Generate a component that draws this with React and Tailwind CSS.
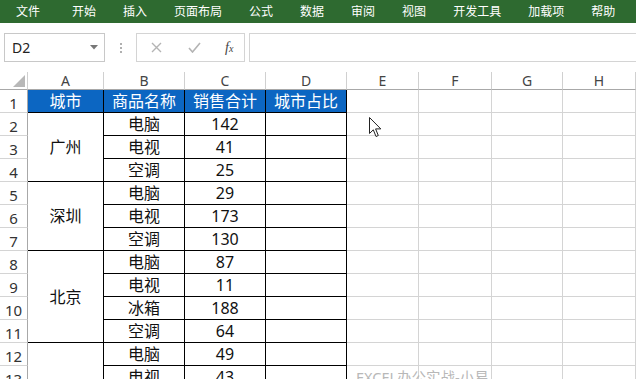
const tabs = ['文件', '开始', '插入', '页面布局', '公式', '数据', '审阅', '视图', '开发工具', '加载项', '帮助']

const products = ['电脑', '电视', '空调', '电脑', '电视', '空调', '电脑', '电视', '冰箱', '空调', '电脑', '电视']
const sales = [142, 41, 25, 29, 173, 130, 87, 11, 188, 64, 49, 43]

const rowNums = [1, 2, 3, 4, 5, 6, 7, 8, 9, 10, 11, 12, 13]

function ColHeader({ label }) {
  return (
    <div className="h-[18px] border-r border-b border-r-[#d0d0d0] border-b-[#a8a8a8] flex items-end justify-center pb-[1px] text-[14px] leading-none text-[#444]">
      {label}
    </div>
  )
}

function BlueCell({ children }) {
  return (
    <div className="h-[23px] bg-[#0c66c2] border-r border-b border-black flex items-center justify-center text-white text-[16px] leading-none">
      {children}
    </div>
  )
}

function Cell({ children, h = 'h-[23px]' }) {
  return (
    <div className={`${h} border-r border-b border-black flex items-center justify-center text-[16px] leading-none text-[#111]`}>
      {children}
    </div>
  )
}

function TableCol({ letter, width, title, values }) {
  return (
    <div className={`${width} shrink-0 flex flex-col`}>
      <ColHeader label={letter} />
      <BlueCell>{title}</BlueCell>
      {values.map((v, i) => (
        <Cell key={i}>{v}</Cell>
      ))}
    </div>
  )
}

function EmptyCol({ letter, width }) {
  return (
    <div className={`${width} shrink-0 flex flex-col`}>
      <ColHeader label={letter} />
      {rowNums.map((n) => (
        <div key={n} className="h-[23px] border-r border-b border-[#d4d4d4]" />
      ))}
    </div>
  )
}

export default function App() {
  return (
    <div
      className="relative w-[636px] h-[379px] overflow-hidden bg-white"
      style={{ fontFamily: '"Noto Sans", "Noto Sans CJK SC", sans-serif' }}
    >
      {/* ribbon tabs */}
      <div className="h-[23px] bg-[#2e6a30] flex items-center pl-[16px] gap-[27px] text-white text-[12px] leading-none">
        {tabs.map((t, i) => (
          <span key={t} className={i === 0 ? 'mr-[5px]' : ''}>{t}</span>
        ))}
      </div>

      {/* formula bar */}
      <div className="h-[49px] flex items-start pt-[10px]">
        <div className="ml-[4px] w-[101px] h-[29px] border border-[#c8c8c8] flex items-center justify-between pl-[7px] pr-[6px]">
          <span className="text-[14px] text-[#222] leading-none">D2</span>
          <svg width="8" height="5" viewBox="0 0 8 5">
            <path d="M0 0 L8 0 L4 4.5 Z" fill="#777" />
          </svg>
        </div>
        <div className="w-[31px] h-[29px] flex flex-col items-center justify-center gap-[2px]">
          <span className="w-[2px] h-[2px] bg-[#b0b0b0]" />
          <span className="w-[2px] h-[2px] bg-[#b0b0b0]" />
          <span className="w-[2px] h-[2px] bg-[#b0b0b0]" />
        </div>
        <div className="w-[109px] h-[29px] border border-[#d4d4d4] flex items-center pl-[14px]">
          <svg width="11" height="11" viewBox="0 0 11 11" className="mr-[26px]">
            <path d="M1 1 L10 10 M10 1 L1 10" stroke="#b4b4b4" strokeWidth="1.4" />
          </svg>
          <svg width="13" height="11" viewBox="0 0 13 11" className="mr-[24px]">
            <path d="M1 6 L4.5 10 L12 1" stroke="#b4b4b4" strokeWidth="1.6" fill="none" />
          </svg>
          <span className="text-[14px] italic text-[#444] leading-none" style={{ fontFamily: '"Liberation Serif", serif' }}>
            f<span className="text-[10px]">x</span>
          </span>
        </div>
        <div className="ml-[4px] flex-1 h-[29px] border-y border-l border-[#d4d4d4]" />
      </div>

      {/* sheet */}
      <div className="flex">
        {/* row headers */}
        <div className="w-[28px] shrink-0 flex flex-col">
          <div className="h-[18px] border-r border-b border-r-[#d0d0d0] border-b-[#a8a8a8] flex items-end justify-end pr-[2px] pb-[2px]">
            <svg width="12" height="12" viewBox="0 0 12 12">
              <path d="M12 0 L12 12 L0 12 Z" fill="#b8b8b8" />
            </svg>
          </div>
          {rowNums.map((n) => (
            <div
              key={n}
              className="h-[23px] border-r border-b border-r-[#a8a8a8] border-b-[#d4d4d4] flex items-end justify-center pb-[1px] text-[15px] leading-none text-[#333]"
            >
              {n}
            </div>
          ))}
        </div>

        {/* column A with merged cells */}
        <div className="w-[76px] shrink-0 flex flex-col">
          <ColHeader label="A" />
          <BlueCell>城市</BlueCell>
          <Cell h="h-[69px]">广州</Cell>
          <Cell h="h-[69px]">深圳</Cell>
          <Cell h="h-[92px]">北京</Cell>
          <Cell h="h-[46px]" />
        </div>

        <TableCol letter="B" width="w-[81px]" title="商品名称" values={products} />
        <TableCol letter="C" width="w-[81px]" title="销售合计" values={sales} />
        <TableCol letter="D" width="w-[81px]" title="城市占比" values={Array(12).fill('')} />

        <EmptyCol letter="E" width="w-[72px]" />
        <EmptyCol letter="F" width="w-[73px]" />
        <EmptyCol letter="G" width="w-[71px]" />
        <EmptyCol letter="H" width="w-[73px]" />
      </div>

      {/* mouse cursor */}
      <svg className="absolute left-[369px] top-[117px]" width="13" height="21" viewBox="0 0 13 21">
        <path d="M0.5 0.5 L0.5 16.5 L4.3 12.8 L7 19.5 L9.3 18.5 L6.6 11.9 L11.8 11.9 Z" fill="#fff" stroke="#222" strokeWidth="1" strokeLinejoin="round" />
      </svg>

      {/* watermark */}
      <div className="absolute left-[356px] top-[370px] text-[14.5px] leading-none text-[#b8b8b8]">
        EXCEL办公实战-小易
      </div>
    </div>
  )
}
